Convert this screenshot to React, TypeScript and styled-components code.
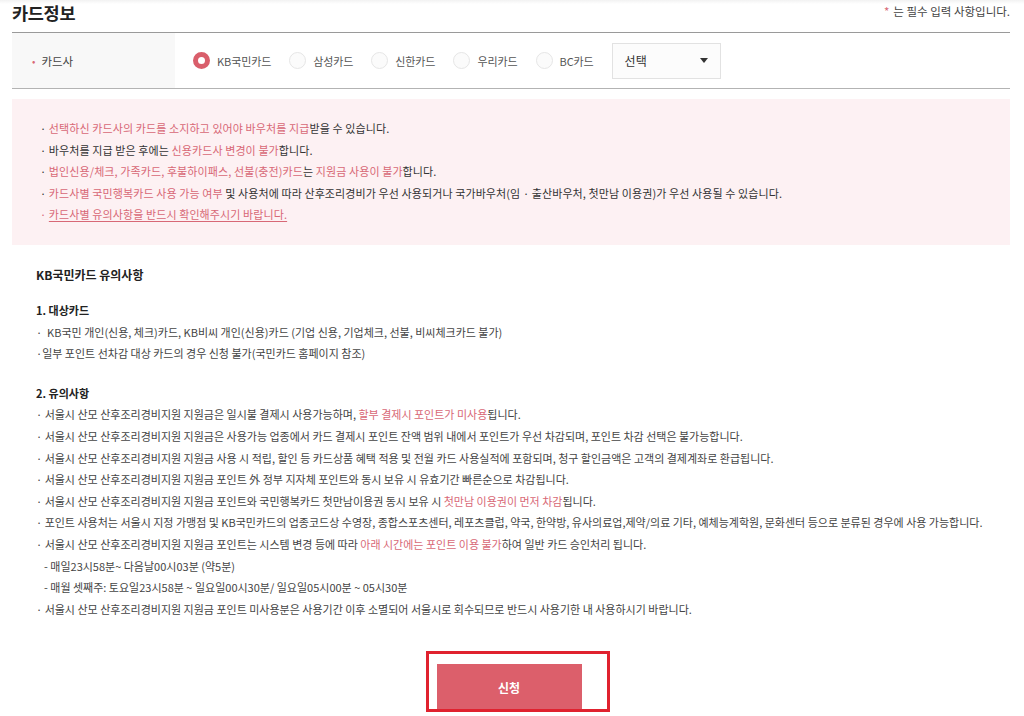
import React from "react";
import styled, { createGlobalStyle } from "styled-components";

const GlobalStyle = createGlobalStyle`
  html, body {
    margin: 0;
    padding: 0;
    background: #fff;
  }
  body {
    font-family: "Noto Sans CJK KR", "Noto Sans", sans-serif;
    color: #444;
  }
`;

const PINK = "#d86876";

// PAGE
const Page = styled("div")`
  padding: 0 14px 0 12px;
  height: 716px;
  overflow: hidden;
  box-sizing: border-box;
  background: linear-gradient(#f2f2f2, #fff 4px);
`;

const Header = styled("div")`
  display: flex;
  align-items: center;
  justify-content: space-between;
  height: 32px;
`;

const Title = styled("h2")`
  margin: 0;
  font-size: 17.5px;
  font-weight: 700;
  color: #222;
  letter-spacing: -0.3px;
  line-height: 1;
  padding-bottom: 6px;
`;

const Required = styled("p")`
  margin: 0;
  font-size: 11.5px;
  color: #444;
  line-height: 1;
  padding-bottom: 8px;
`;

const Star = styled("span")`
  color: ${PINK};
  margin-right: 4px;
`;

// CARD ROW
const FormRow = styled("div")`
  display: flex;
  height: 55px;
  border-top: 1px solid #9a9a9a;
  border-bottom: 1px solid #b3b3b3;
`;

const LabelCell = styled("div")`
  width: 163px;
  background: #f8f8f8;
  display: flex;
  align-items: center;
  padding-left: 20px;
  box-sizing: border-box;
  font-size: 11.5px;
  color: #444;
`;

const Dot = styled("span")`
  color: ${PINK};
  font-size: 10px;
  margin-right: 6px;
`;

const Options = styled("div")`
  display: flex;
  align-items: center;
  padding-left: 18px;
`;

const Option = styled("label")`
  display: flex;
  align-items: center;
  gap: 7px;
  margin-right: 18px;
  font-size: 11px;
  color: #555;
  letter-spacing: -0.1px;
`;

const Radio = styled("span")<{ $on?: boolean }>`
  width: 17px;
  height: 17px;
  border-radius: 50%;
  box-sizing: border-box;
  flex: none;
  ${p =>
    p.$on
      ? `border: 5px solid #d95e6b; background: #fff;`
      : `border: 1px solid #e6e6e6; background: #fbfbfb;`}
`;

const Select = styled("div")`
  width: 109px;
  height: 36px;
  border: 1px solid #e2e2e2;
  background: #fcfcfc;
  box-sizing: border-box;
  display: flex;
  align-items: center;
  justify-content: space-between;
  padding: 0 12px 0 12px;
  font-size: 12px;
  color: #333;
`;

const Caret = styled("span")`
  width: 0;
  height: 0;
  border-left: 4px solid transparent;
  border-right: 4px solid transparent;
  border-top: 5px solid #333;
`;

// NOTICE BOX
const NoticeBox = styled("ul")`
  margin: 10px 0 0;
  padding: 19px 28px;
  list-style: none;
  background: #fdf1f3;
  font-size: 11px;
  line-height: 21.5px;
  color: #333;
  letter-spacing: 0.1px;
`;

const Item = styled("li")<{ $indent?: number }>`
  white-space: nowrap;
  padding-left: ${p => p.$indent || 0}px;
`;

const Em = styled("span")`
  color: ${PINK};
`;

const Under = styled("span")`
  color: ${PINK};
  text-decoration: underline;
  text-underline-offset: 2px;
`;

// DETAIL
const Detail = styled("div")`
  padding-left: 24px;
  margin-top: 19px;
  font-size: 11px;
  line-height: 21.6px;
  color: #444;
  letter-spacing: 0;
`;

const DetailTitle = styled("h3")`
  margin: 0 0 15px;
  font-size: 12px;
  font-weight: 700;
  color: #222;
  line-height: 21.6px;
`;

const SectionTitle = styled("h4")<{ $gap?: number }>`
  margin: ${p => p.$gap || 0}px 0 0;
  font-size: 11px;
  font-weight: 700;
  color: #222;
  line-height: 21.6px;
`;

const List = styled("ul")`
  margin: 0;
  padding: 0;
  list-style: none;
`;

// BUTTON
const ButtonRow = styled("div")`
  display: flex;
  justify-content: center;
  margin-top: 44px;
  padding-right: 4px;
`;

const ButtonWrap = styled("div")`
  position: relative;
`;

const ApplyButton = styled("button")`
  width: 145px;
  height: 46px;
  border: none;
  background: #dc5f6b;
  color: #fff;
  font-family: "Noto Sans CJK KR", sans-serif;
  font-size: 12px;
  font-weight: 700;
  padding-top: 2px;
`;

const Highlight = styled("span")`
  position: absolute;
  left: -11px;
  right: -28px;
  top: -13px;
  bottom: -2px;
  border: 3px solid #e0222f;
  pointer-events: none;
`;

const cards = ["KB국민카드", "삼성카드", "신한카드", "우리카드", "BC카드"];

export default function App() {
  return (
    <>
      <GlobalStyle />
      <Page>
        <Header>
          <Title>카드정보</Title>
          <Required>
            <Star>*</Star>는 필수 입력 사항입니다.
          </Required>
        </Header>

        <FormRow>
          <LabelCell>
            <Dot>•</Dot>카드사
          </LabelCell>
          <Options>
            {cards.map((c, i) => (
              <Option key={c}>
                <Radio $on={i === 0} />
                {c}
              </Option>
            ))}
            <Select>
              선택
              <Caret />
            </Select>
          </Options>
        </FormRow>

        <NoticeBox>
          <Item>
            · <Em>선택하신 카드사의 카드를 소지하고 있어야 바우처를 지급</Em>받을 수 있습니다.
          </Item>
          <Item>
            · 바우처를 지급 받은 후에는 <Em>신용카드사 변경이 불가</Em>합니다.
          </Item>
          <Item>
            · <Em>법인신용/체크, 가족카드, 후불하이패스, 선불(충전)카드</Em>는{" "}
            <Em>지원금 사용이 불가</Em>합니다.
          </Item>
          <Item>
            · <Em>카드사별 국민행복카드 사용 가능 여부</Em> 및 사용처에 따라 산후조리경비가 우선
            사용되거나 국가바우처(임 · 출산바우처, 첫만남 이용권)가 우선 사용될 수 있습니다.
          </Item>
          <Item>
            <Em>· </Em>
            <Under>카드사별 유의사항을 반드시 확인해주시기 바랍니다.</Under>
          </Item>
        </NoticeBox>

        <Detail>
          <DetailTitle>KB국민카드 유의사항</DetailTitle>

          <SectionTitle>1. 대상카드</SectionTitle>
          <List>
            <Item>
              · &nbsp;KB국민 개인(신용, 체크)카드, KB비씨 개인(신용)카드 (기업 신용, 기업체크, 선불,
              비씨체크카드 불가)
            </Item>
            <Item>·일부 포인트 선차감 대상 카드의 경우 신청 불가(국민카드 홈페이지 참조)</Item>
          </List>

          <SectionTitle $gap={18}>2. 유의사항</SectionTitle>
          <List>
            <Item>
              · 서울시 산모 산후조리경비지원 지원금은 일시불 결제시 사용가능하며,{" "}
              <Em>할부 결제시 포인트가 미사용</Em>됩니다.
            </Item>
            <Item>
              · 서울시 산모 산후조리경비지원 지원금은 사용가능 업종에서 카드 결제시 포인트 잔액 범위
              내에서 포인트가 우선 차감되며, 포인트 차감 선택은 불가능합니다.
            </Item>
            <Item>
              · 서울시 산모 산후조리경비지원 지원금 사용 시 적립, 할인 등 카드상품 혜택 적용 및 전월
              카드 사용실적에 포함되며, 청구 할인금액은 고객의 결제계좌로 환급됩니다.
            </Item>
            <Item>
              · 서울시 산모 산후조리경비지원 지원금 포인트 外 정부 지자체 포인트와 동시 보유 시
              유효기간 빠른순으로 차감됩니다.
            </Item>
            <Item>
              · 서울시 산모 산후조리경비지원 지원금 포인트와 국민행복카드 첫만남이용권 동시 보유 시{" "}
              <Em>첫만남 이용권이 먼저 차감</Em>됩니다.
            </Item>
            <Item>
              · 포인트 사용처는 서울시 지정 가맹점 및 KB국민카드의 업종코드상 수영장, 종합스포츠센터,
              레포츠클럽, 약국, 한약방, 유사의료업,제약/의료 기타, 예체능계학원, 문화센터 등으로 분류된
              경우에 사용 가능합니다.
            </Item>
            <Item>
              · 서울시 산모 산후조리경비지원 지원금 포인트는 시스템 변경 등에 따라{" "}
              <Em>아래 시간에는 포인트 이용 불가</Em>하여 일반 카드 승인처리 됩니다.
            </Item>
            <Item $indent={8}>- 매일23시58분~ 다음날00시03분 (약5분)</Item>
            <Item $indent={8}>
              - 매월 셋째주: 토요일23시58분 ~ 일요일00시30분/ 일요일05시00분 ~ 05시30분
            </Item>
            <Item>
              · 서울시 산모 산후조리경비지원 지원금 포인트 미사용분은 사용기간 이후 소멸되어 서울시로
              회수되므로 반드시 사용기한 내 사용하시기 바랍니다.
            </Item>
          </List>
        </Detail>

        <ButtonRow>
          <ButtonWrap>
            <ApplyButton>신청</ApplyButton>
            <Highlight />
          </ButtonWrap>
        </ButtonRow>
      </Page>
    </>
  );
}
